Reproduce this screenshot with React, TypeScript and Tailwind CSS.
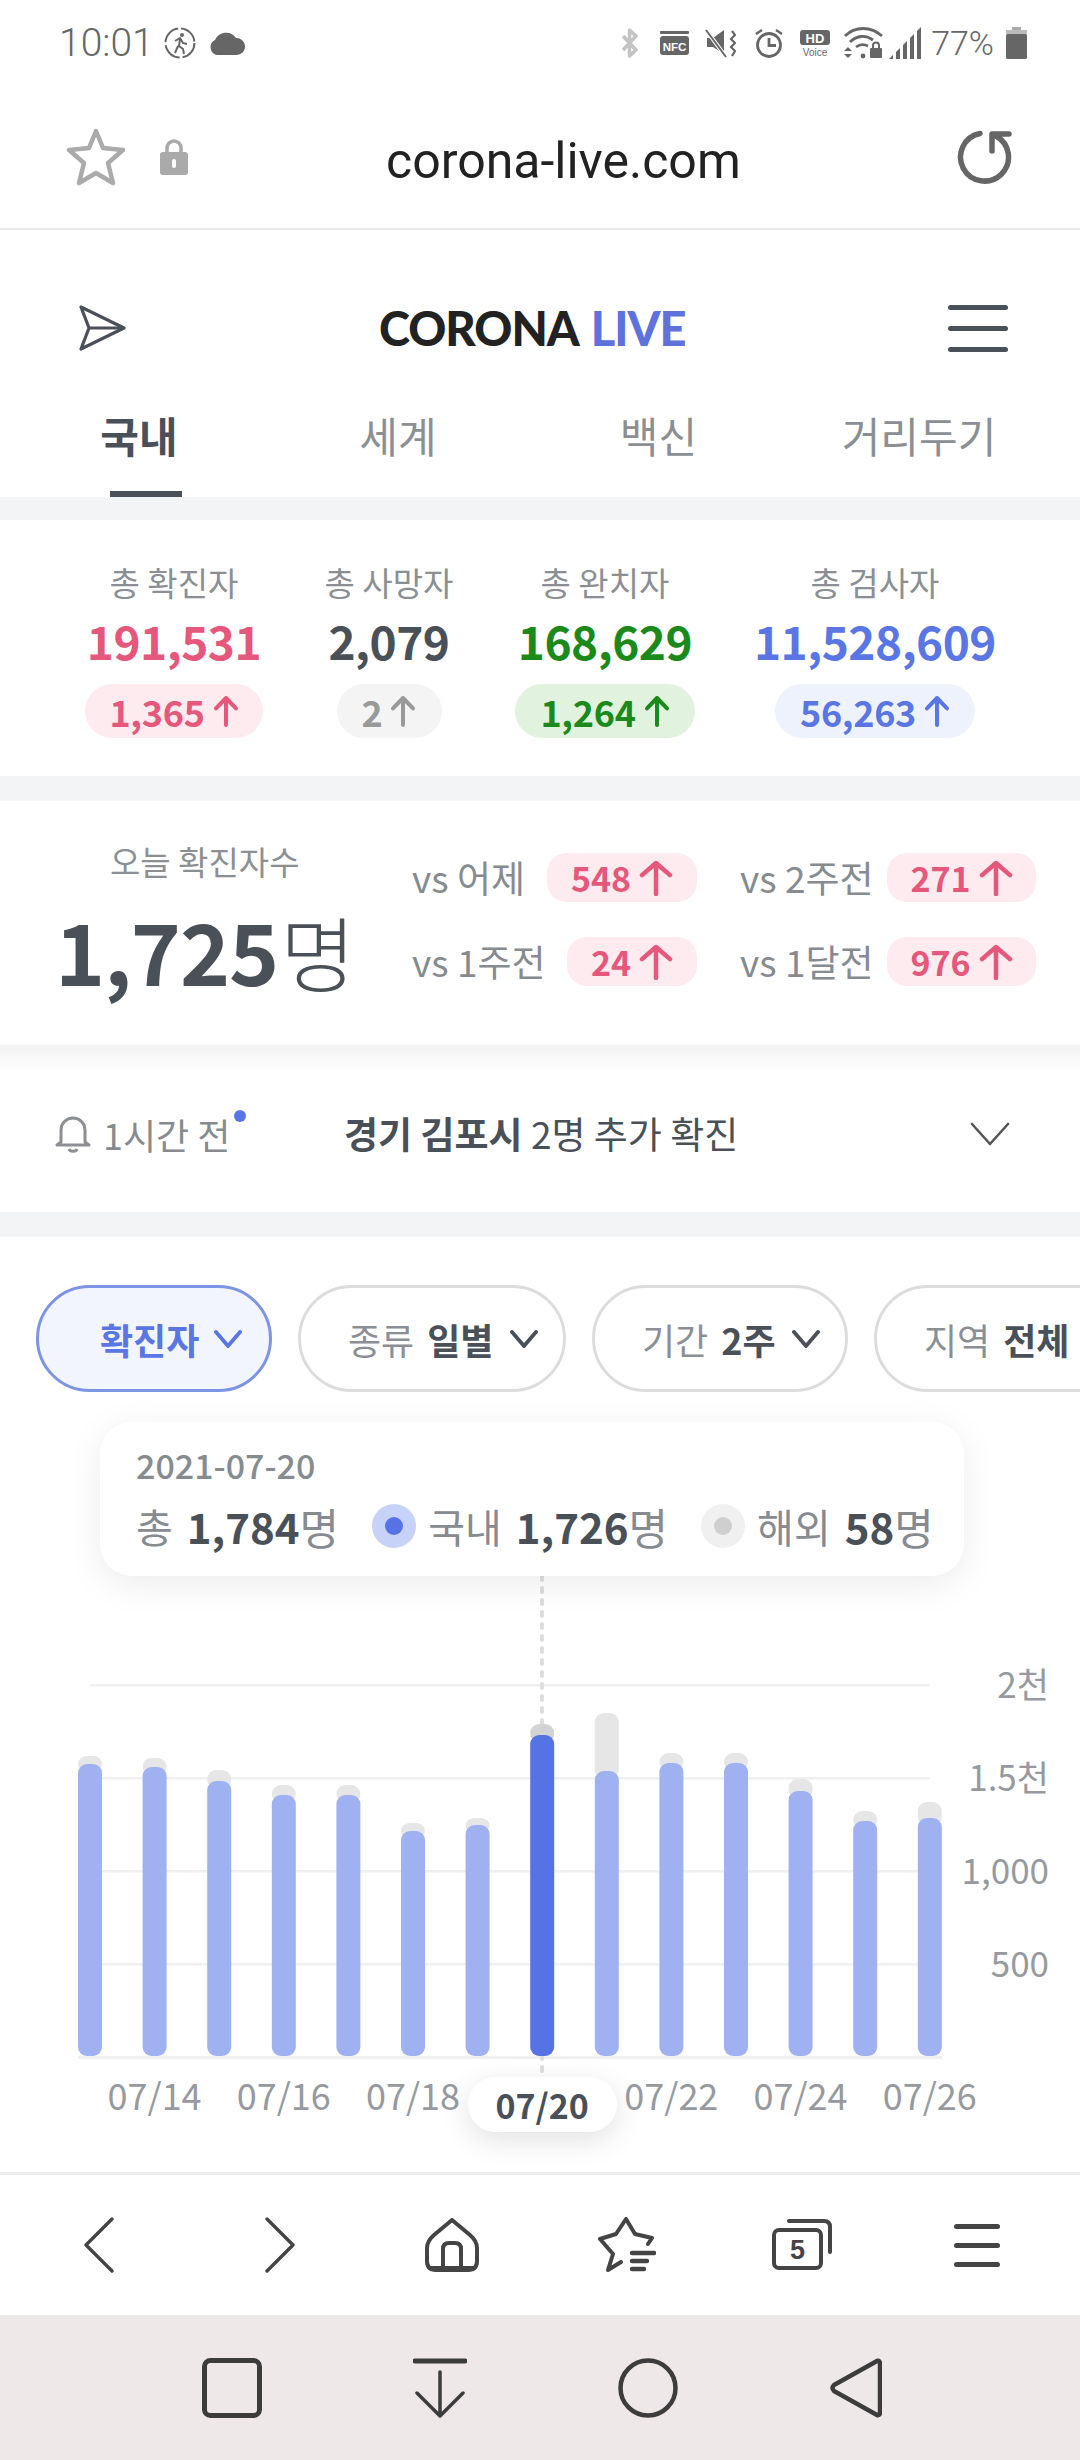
import React from "react";

const KR = "font-['Noto_Sans_CJK_KR','Noto_Sans',sans-serif]";

function Arrow({ color, w = 26, h = 32, sw = 4 }: { color: string; w?: number; h?: number; sw?: number }) {
  return (
    <svg width={w} height={h} viewBox={`0 0 ${w} ${h}`} fill="none" stroke={color} strokeWidth={sw} strokeLinecap="round" strokeLinejoin="round">
      <path d={`M${w / 2} ${h - 2}V3M3 ${h * 0.42}L${w / 2} 3L${w - 3} ${h * 0.42}`} />
    </svg>
  );
}

function Chevron({ w = 28, h = 20, color = "#495057", sw = 4 }: { w?: number; h?: number; color?: string; sw?: number }) {
  return (
    <svg width={w} height={h} viewBox={`0 0 ${w} ${h}`} fill="none" stroke={color} strokeWidth={sw} strokeLinecap="round" strokeLinejoin="round">
      <path d={`M2 2L${w / 2} ${h - 2}L${w - 2} 2`} />
    </svg>
  );
}

function StatusIcons() {
  return (
    <div className="ml-auto flex items-center">
      <svg width="18" height="30" viewBox="0 0 18 30" fill="none" stroke="#c4c4c4" strokeWidth="3.5" strokeLinejoin="round"><path d="M2 8L15 22L8.5 28V2L15 8L2 22" /></svg>
      <svg className="ml-[21px]" width="29" height="24" viewBox="0 0 29 24"><rect x="0" y="0" width="29" height="3" rx="1" fill="#666" /><rect x="0" y="5" width="29" height="19" rx="3" fill="#666" /><text x="14.5" y="20" textAnchor="middle" fontSize="11.5" fontWeight="700" fill="#fff" fontFamily="Liberation Sans">NFC</text></svg>
      <svg className="ml-[16px]" width="31" height="29" viewBox="0 0 31 29"><path d="M2 9H8L19 1V25L8 18H2Z" fill="#666" /><path d="M1 1L21 28" stroke="#fff" strokeWidth="4" /><path d="M1 1L21 28" stroke="#666" strokeWidth="2" /><path d="M27 2L30 6L26 10L30 14L26 18L30 22L27 27" fill="none" stroke="#666" strokeWidth="2.2" /></svg>
      <svg className="ml-[19px]" width="28" height="30" viewBox="0 0 28 30" fill="none" stroke="#666" strokeWidth="2.8"><circle cx="14" cy="17" r="11.5" /><path d="M14 10V17.5H21" /><path d="M1 6L7 2M27 6L21 2" strokeWidth="2.4" /></svg>
      <svg className="ml-[17px]" width="30" height="27" viewBox="0 0 30 27"><rect width="30" height="15" rx="3" fill="#666" /><text x="15" y="12.5" textAnchor="middle" fontSize="13" fontWeight="700" fill="#fff" fontFamily="Liberation Sans">HD</text><text x="15" y="26" textAnchor="middle" fontSize="10" fill="#666" fontFamily="Liberation Sans">Voice</text></svg>
      <svg className="ml-[14px]" width="39" height="32" viewBox="0 0 39 32" fill="none" stroke="#666"><path d="M1 9C11 -1 27 -1 38 9" strokeWidth="2.8" /><path d="M6 15C13 8 22 8 29 13" strokeWidth="2.8" /><path d="M12 20C16 17 20 17 24 19" strokeWidth="2.8" /><circle cx="19" cy="29" r="2.4" fill="#666" stroke="none" /><path d="M4 20L8 24H0ZM4 31L0 27H8Z" fill="#666" stroke="none" /><rect x="26" y="21" width="12" height="10" rx="1" fill="#666" stroke="none" /><path d="M29 21V18.5A3 3 0 0 1 35 18.5V21" strokeWidth="2" /></svg>
      <svg className="ml-[6px]" width="33" height="32" viewBox="0 0 33 32" fill="#666"><path d="M0 32L4 28V32ZM7 25L11 21V32H7ZM14 18L18 14V32H14ZM21 11L25 7V32H21ZM28 4L32 0V32H28Z" /></svg>
      <span className="ml-[9px] font-['Roboto'] font-light text-[34px] leading-none text-[#666]">77%</span>
      <svg className="ml-[12px] mr-[53px]" width="21" height="32" viewBox="0 0 21 32"><rect x="6" y="0" width="9" height="4" fill="#aaa" /><rect x="0" y="3" width="21" height="4" fill="#bbb" /><rect x="0" y="7" width="21" height="25" rx="1.5" fill="#666" /></svg>
    </div>
  );
}

function StatusBar() {
  return (
    <div className="h-[86px] flex items-center pl-[59px]">
      <span className="font-['Roboto'] font-light text-[39px] leading-none text-[#666]">10:01</span>
      <svg className="ml-[10px]" width="32" height="32" viewBox="0 0 32 32" fill="none" stroke="#666" strokeWidth="2"><circle cx="16" cy="16" r="14.5" strokeDasharray="20 3" /><circle cx="18" cy="8" r="2" fill="#666" stroke="none" /><path d="M11 14L16 11L19 16L23 17M16 12L15 19L19 22L20 27M14 19L11 26" /></svg>
      <svg className="ml-[13px]" width="36" height="24" viewBox="0 0 36 24" fill="#666"><path d="M8 24A8 8 0 0 1 6 9A12 12 0 0 1 27 7A8.5 8.5 0 0 1 28 24Z" /></svg>
      <StatusIcons />
    </div>
  );
}

function UrlBar() {
  return (
    <div className="h-[144px] border-b-2 border-[#e9e9e9] flex items-center pl-[66px] relative">
      <svg width="60" height="58" viewBox="0 0 60 58" fill="none" stroke="#aaa" strokeWidth="4.5" strokeLinejoin="round"><path d="M30 3L37 20L57 22L42 35L47 55L30 45L13 55L18 35L3 22L23 20Z" /></svg>
      <svg className="ml-[34px]" width="28" height="38" viewBox="0 0 28 38"><path d="M7 15V10A7 7 0 0 1 21 10V15" fill="none" stroke="#aaa" strokeWidth="3.5" /><rect y="14" width="28" height="23" rx="3" fill="#aaa" /><rect x="12" y="21" width="4" height="9" rx="2" fill="#fff" /></svg>
      <span className="ml-[198px] font-['Roboto'] text-[50px] leading-none text-[#222] mt-[8px]">corona-live.com</span>
      <svg className="ml-auto mr-[64px] mt-[3px]" width="60" height="60" viewBox="0 0 60 60" fill="none" stroke="#666" strokeWidth="5.5" strokeLinecap="round" strokeLinejoin="round"><path d="M24 4.5A24 24 0 1 0 40 7" /><path d="M36 22V5H53" /></svg>
    </div>
  );
}

function Header() {
  return (
    <div className="h-[267px] flex flex-col">
      <div className="h-[175px] flex items-center pl-[78px] pr-[72px] pt-[21px]">
        <svg width="48" height="46" viewBox="0 0 48 46" fill="none" stroke="#495057" strokeWidth="3.2" strokeLinejoin="round"><path d="M3 2L46 23L3 44L11 23Z" /><path d="M11 23H46" /></svg>
        <div className="ml-[253px] flex font-['Lato'] font-black text-[47px] leading-none tracking-[-1px] text-[#222]">
          <span>CORONA</span>
          <span className="ml-[12px] text-[#5f72dc]">LIVE</span>
        </div>
        <div className="ml-auto flex flex-col gap-[16px]">
          <div className="w-[60px] h-[5px] rounded-full bg-[#495057]" />
          <div className="w-[60px] h-[5px] rounded-full bg-[#495057]" />
          <div className="w-[60px] h-[5px] rounded-full bg-[#495057]" />
        </div>
      </div>
      <div className={`${KR} flex-1 flex text-[42px] text-[#8b8f94] pl-[9px]`}>
        <div className="relative w-[260px] flex justify-center font-bold text-[#495057]">
          <span className="leading-[60px]">국내</span>
          <div className="absolute left-[101px] bottom-0 w-[72px] h-[6px] bg-[#495057]" />
        </div>
        <div className="w-[258px] flex justify-center leading-[60px]">세계</div>
        <div className="w-[263px] flex justify-center leading-[60px]">백신</div>
        <div className="w-[258px] flex justify-center leading-[60px]">거리두기</div>
      </div>
    </div>
  );
}

function Band({ h }: { h: string }) {
  return <div className={`${h} bg-[#f3f4f6]`} />;
}

const totals = [
  { w: "w-[244px]", label: "총 확진자", value: "191,531", delta: "1,365", color: "text-[#e5577b]", hex: "#e5577b", chip: "bg-[#fdebef] w-[178px]" },
  { w: "w-[186px]", label: "총 사망자", value: "2,079", delta: "2", color: "text-[#495057]", hex: "#999999", chip: "bg-[#f4f4f4] w-[105px] !text-[#999]" },
  { w: "w-[246px]", label: "총 완치자", value: "168,629", delta: "1,264", color: "text-[#1b8a1b]", hex: "#1b8a1b", chip: "bg-[#e1f3df] w-[180px]" },
  { w: "w-[294px]", label: "총 검사자", value: "11,528,609", delta: "56,263", color: "text-[#5a76e4]", hex: "#5a76e4", chip: "bg-[#eef2fd] w-[200px]" },
];

function Totals() {
  return (
    <div className={`${KR} h-[256px] flex pl-[52px] pt-[37px]`}>
      {totals.map((t) => (
        <div key={t.label} className={`${t.w} flex flex-col items-center`}>
          <div className="text-[33px] leading-[50px] text-[#8b8f94]">{t.label}</div>
          <div className={`text-[46px] leading-[66px] font-bold tracking-[-0.5px] ${t.color}`}>{t.value}</div>
          <div className={`mt-[11px] h-[54px] rounded-full flex items-center justify-center gap-[8px] text-[36px] font-bold tracking-[-0.3px] ${t.color} ${t.chip}`}>
            <span>{t.delta}</span>
            <Arrow color={t.hex} />
          </div>
        </div>
      ))}
    </div>
  );
}

function Vs({ label, value, chip }: { label: string; value: string; chip: string }) {
  return (
    <div className="flex items-center h-[49px]">
      <span className="text-[37px] text-[#868b90] whitespace-nowrap">vs {label}</span>
      <div className={`ml-auto shrink-0 ${chip} h-[49px] rounded-[20px] bg-[#fdebef] flex items-center justify-center gap-[8px] text-[34px] font-bold text-[#e5577b]`}>
        <span>{value}</span>
        <Arrow color="#e5577b" w={34} h={36} sw={4.5} />
      </div>
    </div>
  );
}

function Today() {
  return (
    <div className={`${KR} h-[244px] flex`}>
      <div className="w-[412px] pl-[55px] flex flex-col">
        <div className="mt-[35px] ml-[55px] text-[33px] leading-[50px] text-[#8b8f94]">오늘 확진자수</div>
        <div className="flex items-baseline mt-[13px] text-[#495057] leading-[100px]">
          <span className="text-[85px] font-bold tracking-[-1px]">1,725</span>
          <span className="text-[82px] font-light ml-[2px]">명</span>
        </div>
      </div>
      <div className="flex-1 grid grid-cols-[285px_296px] gap-x-[43px] gap-y-[35px] pt-[52px] content-start">
        <Vs label="어제" value="548" chip="w-[150px]" />
        <Vs label="2주전" value="271" chip="w-[149px]" />
        <Vs label="1주전" value="24" chip="w-[130px]" />
        <Vs label="1달전" value="976" chip="w-[149px]" />
      </div>
    </div>
  );
}

function Notice() {
  return (
    <div className={`${KR} h-[140px] flex items-center pl-[55px] pb-[16px] text-[#868b90] text-[36px]`}>
      <svg width="36" height="38" viewBox="0 0 36 38" fill="none" stroke="#8b8f94" strokeWidth="3" strokeLinejoin="round"><path d="M6 27V15A12 12 0 0 1 30 15V27L34 30H2Z" /><path d="M14 34C15 37 21 37 22 34" /></svg>
      <div className="relative ml-[12px] w-[241px]">
        <span className="leading-none">1시간 전</span>
        <div className="absolute left-[131px] top-[3px] w-[12px] h-[12px] rounded-full bg-[#5a76e4]" />
      </div>
      <div className="text-[#495057] text-[37px] whitespace-nowrap"><span className="font-bold">경기 김포시</span> <span>2명 추가 확진</span></div>
      <div className="ml-auto mr-[70px]"><Chevron w={40} h={24} color="#555" sw={2.6} /></div>
    </div>
  );
}

function Pill({ label, value, cls }: { label?: string; value: string; cls: string }) {
  return (
    <div className={`${cls} h-[107px] shrink-0 rounded-[54px] border-[3px] border-[#dcdcdc] flex items-center whitespace-nowrap text-[36px]`}>
      {label && <span className="text-[#8b8f94]">{label}</span>}
      <span className="ml-[13px] font-bold text-[#495057]">{value}</span>
      <span className="ml-[16px]"><Chevron w={28} h={18} sw={3.8} /></span>
    </div>
  );
}

const domestic = [1765, 1768, 1782, 1796, 1796, 1832, 1826, 1736, 1772, 1764, 1764, 1792, 1822, 1819];
const overseas = [1757, 1759, 1771, 1786, 1786, 1824, 1819, 1725, 1714, 1754, 1754, 1780, 1812, 1803];

function ChartSvg() {
  return (
    <svg className="absolute left-0 top-0" width="1080" height="780" viewBox="0 1393 1080 780">
      {[1686, 1779, 1872, 1965].map((y) => <rect key={y} x="90" y={y - 1} width="840" height="2.5" fill="#f0f0f0" />)}
      <rect x="78" y="2057" width="864" height="3" fill="#f0f0f0" />
      <path d="M542 1577V1725" stroke="#dedede" strokeWidth="4" strokeLinecap="round" strokeDasharray="4 8" />
      <path d="M542 2056V2090" stroke="#dedede" strokeWidth="4" strokeLinecap="round" strokeDasharray="4 8" />
      {domestic.map((top, i) => {
        const x = 78 + i * 64.6;
        const sel = i === 7;
        return (
          <g key={i}>
            <rect x={x} y={overseas[i]} width="24" height={top - overseas[i] + 8} rx="9" fill={sel ? "#d3d3d3" : "#e6e6e6"} />
            <rect x={x} y={top} width="24" height={2057 - top} rx="9" fill={sel ? "#5673e6" : "#a0b1f1"} />
          </g>
        );
      })}
    </svg>
  );
}

function Tooltip() {
  return (
    <div className="absolute left-[100px] top-[30px] w-[864px] h-[154px] rounded-[32px] bg-white shadow-[0_8px_36px_rgba(0,0,0,0.08)] pl-[36px] pt-[18px] text-[#868b90]">
      <div className="text-[34px] leading-[50px] font-medium">2021-07-20</div>
      <div className="flex items-center text-[40px] leading-[60px] mt-[6px] whitespace-nowrap">
        <span>총</span>
        <span className="ml-[14px] text-[42px] font-bold text-[#495057]">1,784</span>
        <span className="text-[43px]">명</span>
        <div className="ml-[33px] w-[44px] h-[44px] rounded-full bg-[#c6d2f7] flex items-center justify-center"><div className="w-[18px] h-[18px] rounded-full bg-[#5673e6]" /></div>
        <span className="ml-[12px]">국내</span>
        <span className="ml-[14px] text-[42px] font-bold text-[#495057]">1,726</span>
        <span className="text-[43px]">명</span>
        <div className="ml-[33px] w-[44px] h-[44px] rounded-full bg-[#f0f0f0] flex items-center justify-center"><div className="w-[18px] h-[18px] rounded-full bg-[#cfcfcf]" /></div>
        <span className="ml-[12px]">해외</span>
        <span className="ml-[14px] text-[42px] font-bold text-[#495057]">58</span>
        <span className="text-[43px]">명</span>
      </div>
    </div>
  );
}

function Chart() {
  const xs = ["07/14", "07/16", "07/18", "07/20", "07/22", "07/24", "07/26"];
  return (
    <div className={`${KR} relative h-[780px]`}>
      <ChartSvg />
      <Tooltip />
      <div className="absolute right-[31px] top-[245px] flex flex-col items-end text-[35px] text-[#969a9e]">
        {["2천", "1.5천", "1,000", "500"].map((t) => <div key={t} className="h-[93px] flex items-center">{t}</div>)}
      </div>
      <div className="absolute left-[90px] top-[672px] flex text-[36px] text-[#969a9e]">
        {xs.map((t) => (
          <div key={t} className="w-[129.2px] h-[60px] flex items-center justify-center">
            {t === "07/20" ? (
              <div className="shrink-0 w-[149px] h-[55px] mt-[20px] rounded-full bg-white shadow-[0_8px_30px_rgba(0,0,0,0.12)] flex items-center justify-center text-[34px] text-[#495057] font-bold">{t}</div>
            ) : t}
          </div>
        ))}
      </div>
    </div>
  );
}

function Filters() {
  return (
    <div className={`${KR} pt-[48px] flex gap-[26px] overflow-hidden`}>
      <div className="ml-[36px] w-[236px] h-[107px] shrink-0 rounded-[54px] border-[3px] border-[#7c94e4] bg-[#f2f5fd] flex items-center pl-[61px] text-[36px] font-bold text-[#5a76e4]">
        <span>확진자</span>
        <span className="ml-[15px]"><Chevron color="#5a76e4" w={28} h={18} sw={3.8} /></span>
      </div>
      <Pill label="종류" value="일별" cls="w-[268px] pl-[47px]" />
      <Pill label="기간" value="2주" cls="w-[256px] pl-[47px]" />
      <Pill label="지역" value="전체" cls="w-[280px] pl-[47px]" />
    </div>
  );
}

function BottomNav() {
  return (
    <div className="h-[143px] border-t-[3px] border-[#ececec] grid grid-cols-[repeat(6,175px)] px-[14px] items-center">
      <div className="flex justify-center mr-[6px]"><svg width="30" height="56" viewBox="0 0 30 56" fill="none" stroke="#444" strokeWidth="3.4" strokeLinecap="round" strokeLinejoin="round"><path d="M28 2L2 28L28 54" /></svg></div>
      <div className="flex justify-center ml-[6px]"><svg width="30" height="56" viewBox="0 0 30 56" fill="none" stroke="#444" strokeWidth="3.4" strokeLinecap="round" strokeLinejoin="round"><path d="M2 2L28 28L2 54" /></svg></div>
      <div className="flex justify-center"><svg width="54" height="54" viewBox="0 0 54 54" fill="none" stroke="#444" strokeWidth="4" strokeLinejoin="round"><path d="M27 2L45 17Q52 23 52 30V43Q52 52 43 52H11Q2 52 2 43V30Q2 23 9 17Z" /><path d="M18 52V31Q18 25 24 25H30Q36 25 36 31V52" /><path d="M4 50H50" /></svg></div>
      <div className="flex justify-center"><svg width="58" height="56" viewBox="0 0 58 56" fill="none" stroke="#444" strokeWidth="4" strokeLinejoin="round" strokeLinecap="round"><path d="M50 27L54 21L37 17L28 2L18 17L2 22L15 37L10 53L23 45" /><path d="M34 36H56M34 44H49M34 52H46" strokeWidth="4.4" /></svg></div>
      <div className="flex justify-center"><svg width="60" height="52" viewBox="0 0 60 52"><rect x="2" y="11" width="47" height="38" rx="5" fill="none" stroke="#444" strokeWidth="4" /><path d="M17 2H52Q58 2 58 8V33" fill="none" stroke="#444" strokeWidth="4" strokeLinecap="round" /><text x="25.5" y="40" textAnchor="middle" fontSize="27" fontWeight="700" fill="#444" fontFamily="Liberation Sans">5</text></svg></div>
      <div className="flex justify-center"><div className="flex flex-col gap-[14px]"><div className="w-[46px] h-[5px] rounded-full bg-[#444]" /><div className="w-[46px] h-[5px] rounded-full bg-[#444]" /><div className="w-[46px] h-[5px] rounded-full bg-[#444]" /></div></div>
    </div>
  );
}

function SystemNav() {
  return (
    <div className="flex-1 bg-[#eee8e9] grid grid-cols-[repeat(4,208px)] px-[128px] items-center">
      <div className="flex justify-center"><svg width="60" height="60" viewBox="0 0 60 60"><rect x="2.5" y="2.5" width="55" height="55" rx="6" fill="none" stroke="#3c3c3c" strokeWidth="5" /></svg></div>
      <div className="flex justify-center"><svg width="54" height="60" viewBox="0 0 54 60" fill="none" stroke="#3c3c3c" strokeLinecap="round" strokeLinejoin="round"><path d="M2 3H52" strokeWidth="5" /><path d="M27 14V58M4 35L27 58L50 35" strokeWidth="3.5" /></svg></div>
      <div className="flex justify-center"><svg width="60" height="60" viewBox="0 0 60 60"><circle cx="30" cy="30" r="27.5" fill="none" stroke="#3c3c3c" strokeWidth="4.5" /></svg></div>
      <div className="flex justify-center"><svg width="52" height="60" viewBox="0 0 52 60" fill="none" stroke="#3c3c3c" strokeWidth="4.5" strokeLinejoin="round"><path d="M47 3Q50 2 50 6V54Q50 58 47 57L4 33Q1 30 4 27Z" /></svg></div>
    </div>
  );
}

export default function App() {
  return (
    <div className="w-[1080px] h-[2460px] bg-white flex flex-col overflow-hidden">
      <StatusBar />
      <UrlBar />
      <Header />
      <Band h="h-[23px]" />
      <Totals />
      <Band h="h-[25px]" />
      <Today />
      <div className="h-[27px] bg-linear-to-b from-[#f2f2f2] to-white" />
      <Notice />
      <Band h="h-[25px]" />
      <Filters />
      <Chart />
      <BottomNav />
      <SystemNav />
    </div>
  );
}
